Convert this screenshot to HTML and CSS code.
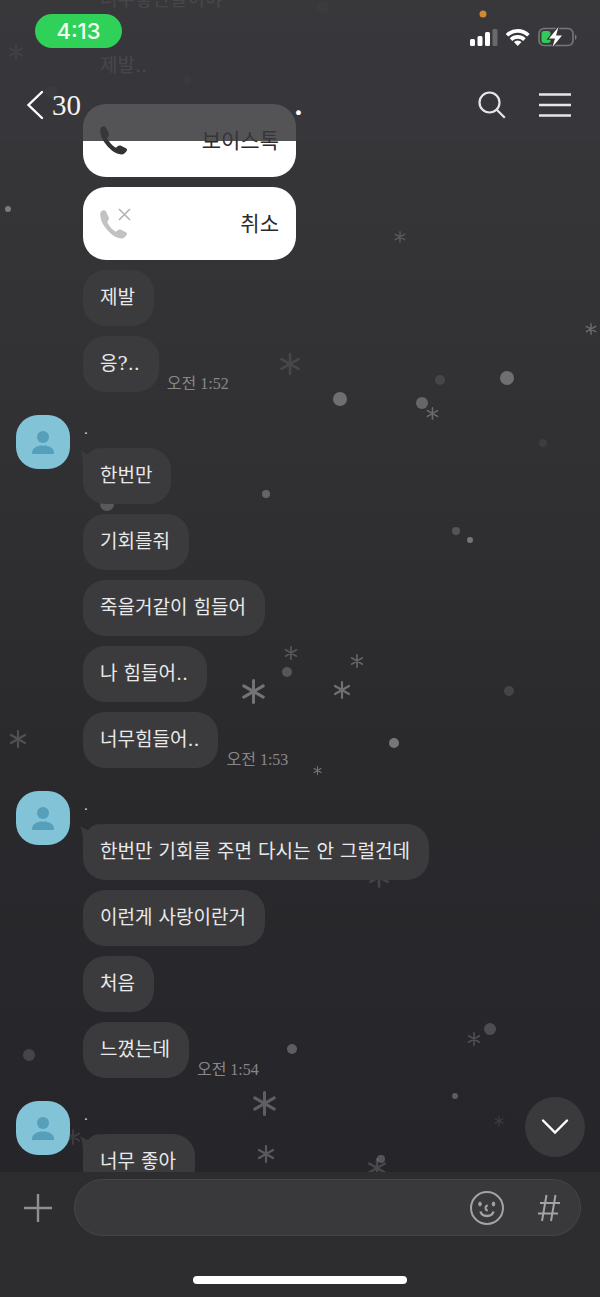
FILE: index.html
```html
<!DOCTYPE html>
<html lang="ko">
  <head>
    <meta charset="UTF-8" />
    <meta name="viewport" content="width=device-width, initial-scale=1.0" />
    <title>채팅</title>
    <link rel="stylesheet" href="styles.css">
  </head>
  <body>
    <svg width="0" height="0" class="defs" aria-hidden="true">
      <symbol id="flake" viewBox="-10 -10 20 20">
        <path d="M0-8.800V8.800M-7.800-4.500L7.800 4.500M-7.800 4.500L7.800-4.500" fill="none" stroke="#fff" stroke-width="2.400" stroke-linecap="round" />
      </symbol>
      <symbol id="person" viewBox="0 0 54 54">
        <circle cx="27" cy="22" r="6" />
        <path d="M16 39v-1c0-5 5-7.500 11-7.500s11 2.500 11 7.500v1z" />
      </symbol>
      <symbol id="phone" viewBox="0 0 28 29">
        <path d="M4.200.3C2.500 0 .2 1.800.2 4c0 4 1.300 8.500 4.300 12.500 4 5.500 10 11.500 17 12 2 .1 4.300-1.800 5.500-4.200.5-1-.5-1.800-1.500-2.400l-5-2.300c-1-.4-1.800-.2-2.500.5L15.800 21.800C12.500 20 9 16 7.200 12.300l1.500-2.500c.4-.7.4-1.600.1-2.400L6 1.600C5.600.8 5 .4 4.200.3z" />
      </symbol>
      <symbol id="tail" viewBox="0 0 20 20">
        <path d="M0 2c3 2 5 3 8 4C11 3 14 0 20 0V20H3C3 11 2 6 0 2z" />
      </symbol>
    </svg>

    <div class="screen">
      <svg class="snow" viewBox="0 0 600 1297" preserveAspectRatio="xMidYMin slice" aria-hidden="true">
        <g fill="#fff">
          <circle cx="8" cy="209" r="3" opacity=".35" />
          <circle cx="323" cy="7" r="6" opacity=".12" />
          <circle cx="51" cy="92" r="6" opacity=".12" />
          <circle cx="340" cy="399" r="7" opacity=".3" />
          <circle cx="507" cy="378" r="7" opacity=".3" />
          <circle cx="422" cy="403" r="6" opacity=".26" />
          <circle cx="440" cy="380" r="5" opacity=".1" />
          <circle cx="543" cy="443" r="4" opacity=".06" />
          <circle cx="266" cy="494" r="4" opacity=".26" />
          <circle cx="456" cy="531" r="4" opacity=".18" />
          <circle cx="470" cy="540" r="3" opacity=".34" />
          <circle cx="107" cy="504" r="7" opacity=".2" />
          <circle cx="287" cy="672" r="5" opacity=".2" />
          <circle cx="509" cy="691" r="5" opacity=".12" />
          <circle cx="394" cy="743" r="5" opacity=".36" />
          <circle cx="29" cy="1055" r="6" opacity=".14" />
          <circle cx="292" cy="1049" r="5" opacity=".25" />
          <circle cx="490" cy="1029" r="6" opacity=".18" />
          <circle cx="455" cy="1096" r="3" opacity=".25" />
          <circle cx="381" cy="1159" r="4" opacity=".22" />
        </g>
        <use href="#flake" x="8" y="44" width="16" height="16" opacity=".3" />
        <use href="#flake" x="182" y="75" width="10" height="10" opacity=".2" />
        <use href="#flake" x="394" y="231" width="12" height="12" opacity=".18" />
        <use href="#flake" x="585" y="323" width="12" height="12" opacity=".28" />
        <use href="#flake" x="279" y="353" width="22" height="22" opacity=".1" />
        <use href="#flake" x="426" y="407" width="13" height="13" opacity=".28" />
        <use href="#flake" x="284" y="646" width="14" height="14" opacity=".2" />
        <use href="#flake" x="350" y="654" width="14" height="14" opacity=".26" />
        <use href="#flake" x="333" y="681" width="18" height="18" opacity=".32" />
        <use href="#flake" x="241" y="679" width="25" height="25" opacity=".34" />
        <use href="#flake" x="9" y="730" width="18" height="18" opacity=".18" />
        <use href="#flake" x="313" y="766" width="9" height="9" opacity=".34" />
        <use href="#flake" x="368" y="866" width="22" height="22" opacity=".12" />
        <use href="#flake" x="467" y="1032" width="14" height="14" opacity=".18" />
        <use href="#flake" x="252" y="1091" width="25" height="25" opacity=".26" />
        <use href="#flake" x="257" y="1145" width="18" height="18" opacity=".24" />
        <use href="#flake" x="494" y="1116" width="10" height="10" opacity=".1" />
        <use href="#flake" x="367" y="1158" width="20" height="20" opacity=".16" />
        <use href="#flake" x="65" y="1129" width="16" height="16" opacity=".1" />
      </svg>

      <header class="top">
        <div class="status">
          <span class="clock">4:13</span>
          <svg class="status-icons" width="108" height="40" viewBox="0 0 108 40" aria-hidden="true">
            <circle cx="13" cy="4" r="3.500" fill="#d08a2c" />
            <g fill="#fff">
              <rect x="0" y="29" width="5" height="7" rx="1.500" />
              <rect x="7.500" y="26" width="5" height="10" rx="1.500" />
              <rect x="15" y="22" width="5" height="14" rx="1.500" />
              <rect x="22.500" y="19" width="5" height="17" rx="1.500" opacity=".25" />
            </g>
            <g fill="none" stroke="#fff" stroke-width="3.600">
              <path d="M37 25.200a15.500 15.500 0 0 1 21.400 0" />
              <path d="M41 29.600a9.500 9.500 0 0 1 13.400 0" />
            </g>
            <path d="M47.700 36l-3.800-3.900a5.500 5.500 0 0 1 7.600 0z" fill="#fff" />
            <rect x="69" y="18.500" width="34" height="17" rx="5" fill="none" stroke="#78787b" stroke-width="1.600" />
            <path d="M105 24.500c2 .6 2 4.800 0 5.400z" fill="#78787b" />
            <rect x="71.500" y="21" width="9" height="12" rx="2.500" fill="#34c759" />
            <path d="M88.500 17L79 28.500h6L82.500 37 92 25.500h-6z" fill="#fff" stroke="#38383b" stroke-width="2.400" paint-order="stroke" />
          </svg>
        </div>
        <nav class="bar">
          <a class="back" href="#">
            <svg width="18" height="30" viewBox="0 0 18 30" aria-hidden="true">
              <path d="M16 2L2.500 15 16 28" fill="none" stroke="#fff" stroke-width="2.400" stroke-linecap="round" />
            </svg>
            <span>30</span>
          </a>
          <h1 class="title">.</h1>
          <div class="tools">
            <button class="icon-btn" aria-label="검색">
              <svg width="30" height="30" viewBox="0 0 30 30">
                <circle cx="12.500" cy="12.500" r="10" fill="none" stroke="#e6e6e7" stroke-width="2.200" />
                <path d="M19.800 19.800l8 8" stroke="#e6e6e7" stroke-width="2.200" />
              </svg>
            </button>
            <button class="icon-btn" aria-label="메뉴">
              <svg width="32" height="30" viewBox="0 0 32 30">
                <path d="M0 4.500h32M0 15h32M0 25.500h32" stroke="#e6e6e7" stroke-width="2.400" />
              </svg>
            </button>
          </div>
        </nav>
      </header>

      <main class="chat">
        <section class="group">
          <p class="bubble faded">너무좋단말이야</p>
          <p class="bubble faded">제발..</p>
          <p class="call">
            <svg width="28" height="29" fill="#333"><use href="#phone" /></svg>
            <span>보이스톡</span>
          </p>
          <p class="call">
            <svg width="34" height="32" viewBox="0 0 34 32" fill="#c0c2c4">
              <use href="#phone" y="2" width="28" height="29" />
              <path d="M19 1l11 11M30 1L19 12" stroke="#b4b4b6" stroke-width="1.600" />
            </svg>
            <span>취소</span>
          </p>
          <p class="bubble">제발</p>
          <div class="line">
            <p class="bubble">응?..</p>
            <time>오전 1:52</time>
          </div>
        </section>

        <section class="group">
          <svg class="avatar"><use href="#person" /></svg>
          <span class="name">.</span>
          <p class="bubble first"><svg class="tail"><use href="#tail" /></svg>한번만</p>
          <p class="bubble">기회를줘</p>
          <p class="bubble">죽을거같이 힘들어</p>
          <p class="bubble">나 힘들어..</p>
          <div class="line">
            <p class="bubble">너무힘들어..</p>
            <time>오전 1:53</time>
          </div>
        </section>

        <section class="group">
          <svg class="avatar"><use href="#person" /></svg>
          <span class="name">.</span>
          <p class="bubble first"><svg class="tail"><use href="#tail" /></svg>한번만 기회를 주면 다시는 안 그럴건데</p>
          <p class="bubble">이런게 사랑이란거</p>
          <p class="bubble">처음</p>
          <div class="line">
            <p class="bubble">느꼈는데</p>
            <time>오전 1:54</time>
          </div>
        </section>

        <section class="group">
          <svg class="avatar"><use href="#person" /></svg>
          <span class="name">.</span>
          <p class="bubble first"><svg class="tail"><use href="#tail" /></svg>너무 좋아</p>
        </section>
      </main>

      <footer class="bottom">
        <button class="to-end" aria-label="맨 아래로">
          <svg width="28" height="18" viewBox="0 0 28 18">
            <path d="M2 2.500l12 12 12-12" fill="none" stroke="#fff" stroke-width="2.400" stroke-linecap="round" />
          </svg>
        </button>
        <form class="compose">
          <button type="button" class="icon-btn" aria-label="추가">
            <svg width="28" height="28" viewBox="0 0 28 28">
              <path d="M14 0v28M0 14h28" stroke="#8e8e93" stroke-width="2.400" />
            </svg>
          </button>
          <div class="field">
            <input type="text" name="message" aria-label="메시지" />
            <button type="button" class="icon-btn" aria-label="이모티콘">
              <svg width="36" height="36" viewBox="0 0 36 36" fill="none" stroke="#a3a3a7" stroke-width="2">
                <circle cx="18" cy="18" r="16" />
                <ellipse cx="11" cy="14" rx="1.300" ry="2" fill="#a3a3a7" stroke-width="1" />
                <ellipse cx="24.500" cy="14" rx="1.300" ry="2" fill="#a3a3a7" stroke-width="1" />
                <path d="M18.800 15.500c-3 .3-3 4.700 0 5" />
                <path d="M11.500 21.500c1.500 6 11.500 6 13 0" stroke-width="2.400" />
              </svg>
            </button>
            <button type="button" class="icon-btn" aria-label="샵검색">
              <svg width="24" height="28" viewBox="0 0 24 28">
                <path d="M9.500 1L5 27M18.500 1L14 27M3 9h20M1 19.500h20" fill="none" stroke="#a3a3a7" stroke-width="2" />
              </svg>
            </button>
          </div>
        </form>
        <div class="home"></div>
      </footer>
    </div>
  </body>
</html>
```

FILE: styles.css
```css
* {
  box-sizing: border-box;
  margin: 0;
}
body {
  background: #27262b;
  font-family: "DejaVu Serif", "Noto Sans CJK KR", sans-serif;
  color: #e9e9ea;
}
button {
  padding: 0;
  border: 0;
  background: none;
}
.defs {
  position: absolute;
}
.screen {
  position: relative;
  display: flex;
  flex-direction: column;
  height: 100vh;
  overflow: hidden;
  background: linear-gradient(#38383a, #353537 15%, #303032 38%, #2a2a2d 58%, #26252a 90%);
}
.snow {
  position: absolute;
  top: 0;
  left: 0;
  width: 100%;
  height: 100%;
}

/* header, lies over the scrolled messages */
.top {
  position: absolute;
  z-index: 2;
  top: 0;
  left: 0;
  right: 0;
  height: 141px;
  background: rgba(56, 56, 59, 0.86);
}
.status {
  display: flex;
  justify-content: space-between;
  align-items: flex-start;
  padding: 10px 22px 0 35px;
}
.clock {
  width: 87px;
  height: 34px;
  margin-top: 4px;
  border-radius: 17px;
  background: #30d158;
  color: #f2fff5;
  font: 500 22px/34px Inter, sans-serif;
  text-align: center;
}
.bar {
  display: grid;
  grid-template-columns: 1fr auto 1fr;
  align-items: center;
  height: 62px;
  margin-top: 24px;
  padding: 0 29px 0 26px;
}
.back {
  display: flex;
  align-items: center;
  gap: 8px;
  color: #f4f4f5;
  font: 29px/32px "Liberation Serif", serif;
  text-decoration: none;
}
.title {
  font: 700 28px/34px Inter, sans-serif;
  color: #fff;
}
.tools {
  display: flex;
  justify-content: flex-end;
  gap: 32px;
}
.icon-btn {
  display: flex;
  align-items: center;
  justify-content: center;
}

/* messages */
.chat {
  position: relative;
  flex: 1;
  min-height: 0;
  display: flex;
  flex-direction: column;
  gap: 23px;
  margin-top: -28px;
  overflow: hidden;
}
.group {
  position: relative;
  flex: none;
  display: flex;
  flex-direction: column;
  align-items: flex-start;
  gap: 10px;
  padding-left: 83px;
}
.avatar {
  position: absolute;
  top: 0;
  left: 16px;
  width: 54px;
  height: 54px;
  border-radius: 22px;
  background: #82c3d8;
  fill: #559fba;
}
.name {
  height: 23px;
  padding-left: 1px;
  font-size: 12px;
  line-height: 30px;
}
.bubble {
  position: relative;
  height: 56px;
  padding: 0 19px 0 17px;
  border-radius: 22px;
  background: #3b3b3d;
  font-size: 19px;
  line-height: 55px;
  white-space: nowrap;
}
.faded {
  background: none;
  color: #a0a0a3;
}
.tail {
  position: absolute;
  top: 0;
  left: -3px;
  width: 20px;
  height: 20px;
  fill: #3b3b3d;
}
.call {
  display: flex;
  align-items: center;
  justify-content: space-between;
  width: 213px;
  height: 73px;
  padding: 0 17px;
  border-radius: 23px;
  background: #fff;
  color: #2b2b2d;
  font-size: 21px;
  line-height: 30px;
}
.line {
  display: flex;
  align-items: flex-end;
  gap: 8px;
}
time {
  color: #88888b;
  font: 16px/16px "Liberation Serif", "Noto Sans CJK KR", serif;
}

/* message box */
.bottom {
  position: relative;
  flex: none;
  padding: 7px 0 13px;
  background: #2d2d2f;
}
.to-end {
  position: absolute;
  right: 15px;
  bottom: 140px;
  display: flex;
  align-items: center;
  justify-content: center;
  width: 60px;
  height: 60px;
  border-radius: 50%;
  background: #3a3a3d;
}
.compose {
  display: flex;
  align-items: center;
  gap: 22px;
  padding: 0 19px 0 24px;
}
.field {
  flex: 1;
  display: flex;
  align-items: center;
  gap: 32px;
  height: 57px;
  padding: 0 19px;
  border: 1px solid #454548;
  border-radius: 29px;
  background: #39393b;
}
.field input {
  flex: 1;
  min-width: 0;
  border: 0;
  outline: 0;
  background: none;
  color: #e9e9ea;
  font: 19px/28px "Noto Sans CJK KR", sans-serif;
}
.home {
  width: 214px;
  height: 8px;
  margin: 40px auto 0;
  border-radius: 4px;
  background: #fff;
}
```
